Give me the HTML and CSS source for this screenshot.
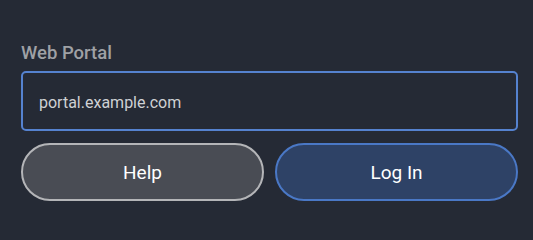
FILE: index.html
```html
<!DOCTYPE html>
<html>
<head>
<meta charset="utf-8">
<link rel="stylesheet" href="styles.css">
</head>
<body>
<div class="form">
  <label class="label" for="portal">Web Portal</label>
  <div class="field"><input id="portal" class="input" type="text" value="portal.example.com"></div>
  <div class="actions">
    <button class="btn btn-help">Help</button>
    <button class="btn btn-login">Log In</button>
  </div>
</div>
</body>
</html>
```
FILE: styles.css
```css
html, body {
  margin: 0;
  padding: 0;
  background: #252a35;
  width: 533px;
  height: 236px;
  overflow: hidden;
  font-family: Roboto, "Liberation Sans", sans-serif;
}
.form {
  padding: 42px 15px 0 21px;
  display: flex;
  flex-direction: column;
}
.label {
  font-size: 18.5px;
  font-weight: 500;
  color: #9fa1a5;
  line-height: 22px;
  margin-bottom: 7px;
}
.field {
  display: flex;
}
.input {
  flex: 1;
  box-sizing: border-box;
  height: 60px;
  border: 2px solid #5582cf;
  border-radius: 5px;
  background: #252a35;
  color: #cfd1d4;
  font-family: Roboto, "Liberation Sans", sans-serif;
  font-size: 16px;
  padding: 2px 16px 0;
  outline: none;
}
.actions {
  display: flex;
  gap: 11px;
  margin-top: 12px;
}
.btn {
  flex: 1;
  height: 58px;
  box-sizing: border-box;
  border-radius: 29px;
  font-family: Roboto, "Liberation Sans", sans-serif;
  font-size: 19px;
  color: #ffffff;
  padding: 0;
}
.btn-help {
  background: #494c54;
  border: 2px solid #b4b5b8;
}
.btn-login {
  background: #2e4266;
  border: 2px solid #4a78c6;
}
```
